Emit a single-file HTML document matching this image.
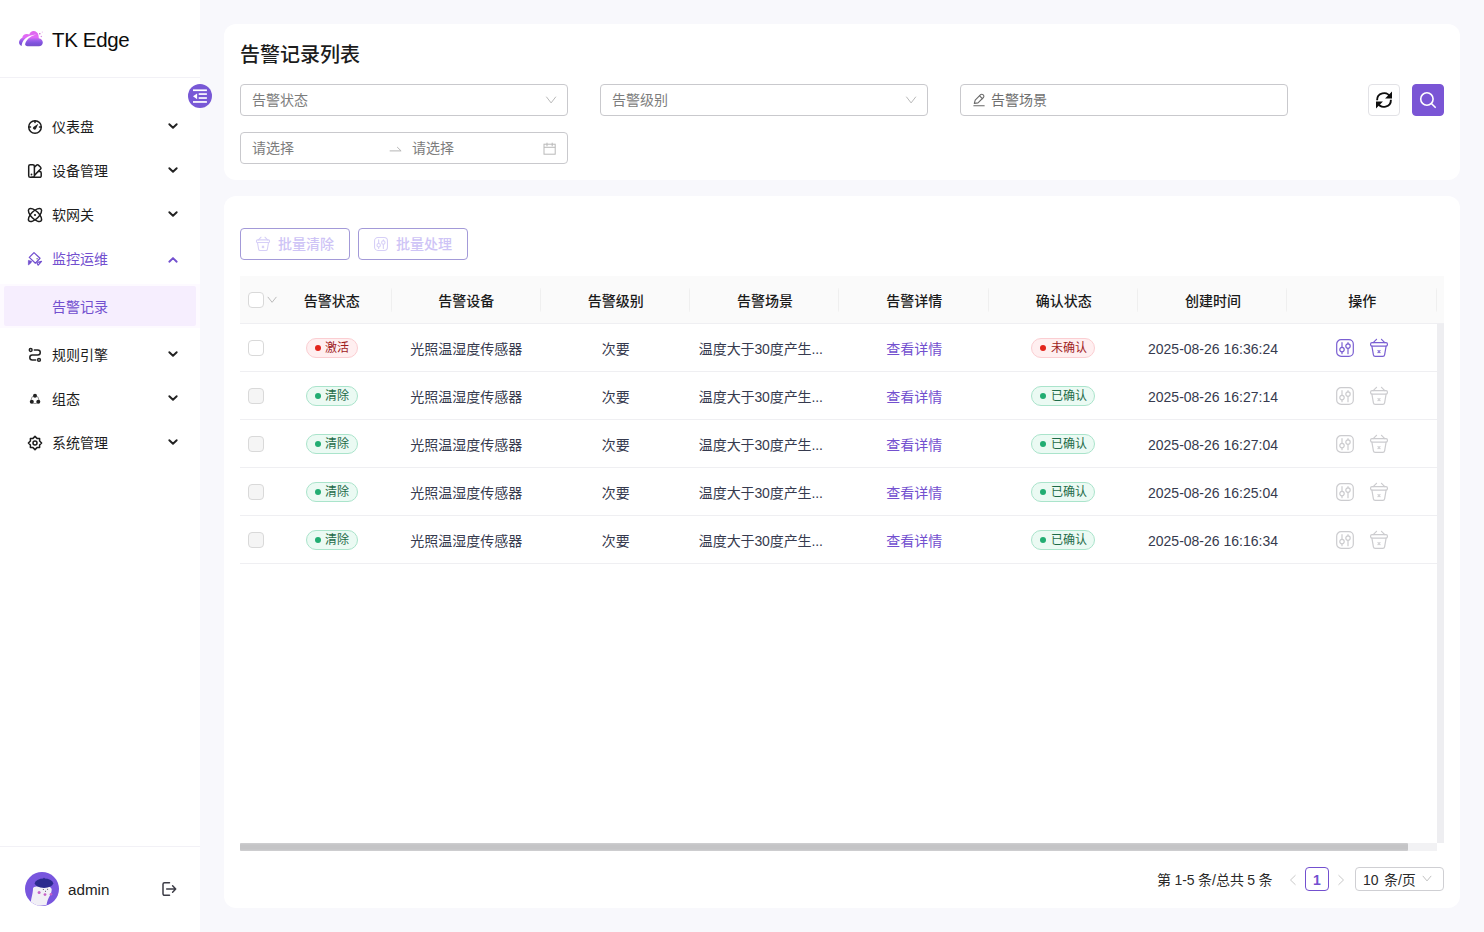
<!DOCTYPE html>
<html lang="zh-CN">
<head>
<meta charset="utf-8">
<title>TK Edge - 告警记录列表</title>
<style>
*{box-sizing:border-box;margin:0;padding:0}
html,body{width:1484px;height:932px;overflow:hidden}
body{font-family:"Liberation Sans","Noto Sans CJK SC",sans-serif;font-size:14px;color:#1f1f1f;background:#f8f8fc;position:relative}
svg{display:block;overflow:visible}
/* ---------- sidebar ---------- */
.side{position:absolute;left:0;top:0;width:200px;height:932px;background:#fff}
.logo{position:absolute;left:0;top:0;width:200px;height:78px;border-bottom:1px solid #f2f1f6}
.logo .lg{position:absolute;left:12px;top:24px}
.logo .t{position:absolute;left:52px;top:24px;font-size:20.5px;line-height:31px;color:#0c0c0c;white-space:nowrap;letter-spacing:-.35px}
.fold{position:absolute;left:188px;top:84px;width:24px;height:24px;border-radius:50%;background:#7858d6;z-index:5}
.fold svg{position:absolute;left:0;top:0}
.mi{position:absolute;left:0;width:200px;height:40px;line-height:40px;font-size:14px;color:#1d1d1d}
.mi .ic{position:absolute;left:27px;top:12px;width:16px;height:16px}
.mi .tx{position:absolute;left:52px;top:0;white-space:nowrap}
.mi .ar{position:absolute;left:167px;top:13px;width:12px;height:12px}
.mi.on{color:#7350cf}
.subwrap{position:absolute;left:0;top:284px;width:200px;height:44px;background:#fdfaff}
.sub{position:absolute;left:4px;top:286px;width:192px;height:40px;background:#f6eefe;border-radius:2px;color:#7350cf;line-height:43px}
.sub span{position:absolute;left:48px;top:0;white-space:nowrap}
.user{position:absolute;left:0;top:846px;width:200px;height:86px;border-top:1px solid #f2f1f6}
.user .av{position:absolute;left:25px;top:25px}
.user .nm{position:absolute;left:68px;top:32px;font-size:15.2px;line-height:22px;color:#222;white-space:nowrap}
.user .out{position:absolute;left:161px;top:34px}
/* ---------- main ---------- */
.card{position:absolute;left:224px;width:1236px;background:#fff;border-radius:12px}
.c1{top:24px;height:156px}
.c2{top:196px;height:712px}
h1{position:absolute;left:16px;top:17px;font-size:20px;line-height:28px;font-weight:500;color:#1c1c1c;white-space:nowrap}
.inp{position:absolute;height:32px;border:1px solid #c9c9cd;border-radius:4px;background:#fff;color:#7d7d7d;line-height:30px;font-size:14px;white-space:nowrap}
.inp .ph{position:absolute;left:11px;top:0}
.inp svg{position:absolute}
.btn{position:absolute;height:32px;border-radius:4px;line-height:30px;font-size:14px;white-space:nowrap}
.btn svg{position:absolute}
.ib{width:32px;border:1px solid #e2e2e6;background:#fff}
.ib.pri{background:#7a55d5;border-color:#7a55d5}
.gb{border:1px solid #a39ad8;color:#cec4f6;font-weight:500;background:#fff}
.gb span{position:absolute;top:0}
/* table */
.tb{position:absolute;left:16px;top:80px;width:1204px;height:575px}
.th{position:absolute;left:0;top:0;width:1204px;height:48px;background:#fafafa;border-bottom:1px solid #efeff2;font-weight:500;color:#1a1a1a}
.th .c{position:absolute;top:0;height:47px;line-height:50px;text-align:center;white-space:nowrap}
.th i{position:absolute;top:12px;width:1px;height:24px;background:linear-gradient(#f6f6f6,#efefef 10%,#efefef 90%,#f6f6f6)}
.tr{position:absolute;left:0;width:1197px;height:48px;border-bottom:1px solid #efeff2;color:#363a4e}
.tr .c{position:absolute;top:0;height:47px;line-height:50px;text-align:center;white-space:nowrap;overflow:hidden}
.cb{position:absolute;left:8px;top:16px;width:16px;height:16px;border:1px solid #d9d9d9;border-radius:4px;background:#fff}
.cb.dis{background:#f5f5f5}
.tag{position:absolute;top:14px;height:20px;border-radius:10px;border:1px solid;font-size:12px;line-height:18px;text-align:left;padding-left:18px}
.tag:before{content:"";position:absolute;left:8px;top:6px;width:6px;height:6px;border-radius:50%}
.tag.r{background:#ffeff0;border-color:#fbced2;color:#9e1c1e}
.tag.r:before{background:#e3241b}
.tag.g{background:#ebfaf3;border-color:#aae4cb;color:#1e6a48}
.tag.g:before{background:#22ad72}
.lk{color:#7350cf}
.vtrack{position:absolute;left:1197px;top:48px;width:7px;height:519px;background:#eeeef1}
.htrack{position:absolute;left:0;top:567px;width:1197px;height:8px;background:#f2f2f4}
.hthumb{position:absolute;left:0;top:0;width:1168px;height:8px;background:linear-gradient(#d0d0d2,#c4c4c6 25%,#c4c4c6 75%,#d0d0d2);border-radius:1px}
/* pagination */
.pg{position:absolute;font-size:14px;line-height:24px;color:#2a2a2a;white-space:nowrap}
</style>
</head>
<body>
<div class="side">
  <div class="logo">
    <svg class="lg" width="40" height="30" viewBox="12 24 40 30">
      <defs><linearGradient id="lg" gradientUnits="userSpaceOnUse" x1="0" y1="31" x2="0" y2="46.5"><stop offset="0" stop-color="#de66ec"/><stop offset="0.4" stop-color="#e36af7"/><stop offset="0.62" stop-color="#9a5eea"/><stop offset="0.78" stop-color="#7f53dd"/><stop offset="1" stop-color="#7650c8"/></linearGradient></defs>
      <path d="M21.4 46c-1.900-.900-2.800-2.900-2.200-4.700.600-1.700 2-3 3.100-3.500.200-2.300 2.200-4 4.700-3.900.900 0 1.700.200 2.300.500.600-2 2.300-3.300 4.200-3.300 2.400 0 4.400 1.700 4.900 3.900.300 1.300.400 2.500.400 3.300 2.300.300 4 2 4 4.200 0 2.200-1.700 3.800-3.800 3.800H27.600c-1.500 0-2.700-1.300-2.700-2.700z" fill="url(#lg)"/>
      <path d="M21.700 46.600C21.300 41 27 35 36.200 34.600 30.200 36 25.200 40 24.700 46.600z" fill="#fff"/>
      <circle cx="39.800" cy="33.800" r=".8" fill="#c860c8"/><circle cx="42.300" cy="32.100" r=".6" fill="#e9b5ee"/><circle cx="41.300" cy="36.500" r=".7" fill="#d88ae6"/>
    </svg>
    <div class="t">TK Edge</div>
  </div>
  <div class="mi" style="top:107px"><svg class="ic" viewBox="27 119 16 16"><g fill="none" stroke="#1c1c1c" stroke-width="1.500" stroke-linecap="round"><circle cx="35" cy="127" r="6.300"/><path d="M35 121.300v1.200M29.300 127h1.200M39.500 127h1.200"/></g><path d="M38.300 123.700l-2.300 5a1.600 1.600 0 1 1-2.600-1.800z" fill="#222"/></svg><span class="tx">仪表盘</span><svg class="ar" viewBox="167 120 12 12"><path d="M169.300 124.200l3.700 3.600 3.700-3.600" fill="none" stroke="#222" stroke-width="1.900" stroke-linecap="round" stroke-linejoin="round"/></svg></div>
  <div class="mi" style="top:151px"><svg class="ic" viewBox="27 163 16 16"><g fill="none" stroke="#1c1c1c" stroke-width="1.500" stroke-linecap="round" stroke-linejoin="round"><rect x="28.700" y="164.700" width="5.700" height="12.600" rx="1.600"/><path d="M34.600 167l2-1.900a1.300 1.300 0 0 1 1.800 0l2.200 2.200a1.300 1.300 0 0 1 0 1.800l-6 6"/><path d="M38.500 171.600h1.300a1.400 1.400 0 0 1 1.400 1.400v2.900a1.400 1.400 0 0 1-1.400 1.400h-8"/></g><circle cx="31.500" cy="174.500" r=".9" fill="#222"/></svg><span class="tx">设备管理</span><svg class="ar" viewBox="167 120 12 12"><path d="M169.300 124.200l3.700 3.600 3.700-3.600" fill="none" stroke="#222" stroke-width="1.900" stroke-linecap="round" stroke-linejoin="round"/></svg></div>
  <div class="mi" style="top:195px"><svg class="ic" viewBox="27 207 16 16"><g fill="none" stroke="#1c1c1c" stroke-width="1.500"><ellipse cx="35" cy="215" rx="8.500" ry="3.800" transform="rotate(45 35 215)"/><ellipse cx="35" cy="215" rx="8.500" ry="3.800" transform="rotate(-45 35 215)"/></g><circle cx="35" cy="215" r="1.100" fill="#222"/></svg><span class="tx">软网关</span><svg class="ar" viewBox="167 120 12 12"><path d="M169.300 124.200l3.700 3.600 3.700-3.600" fill="none" stroke="#222" stroke-width="1.900" stroke-linecap="round" stroke-linejoin="round"/></svg></div>
  <div class="mi on" style="top:239px"><svg class="ic" viewBox="27 251 16 16"><g fill="none" stroke="#7350cf" stroke-width="1.250" stroke-linecap="round" stroke-linejoin="round"><path d="M34 252.600l6 5.700-4.600 4.900-6.100-5.800z"/><path d="M37.800 262.300l3.700-.9-3.300 3.800-1-1.800"/></g><path d="M28.400 260.400l3.300.9-.9 1.700-2.400 1.900z" fill="#7350cf" stroke="#7350cf" stroke-width=".7" stroke-linejoin="round"/><circle cx="37.100" cy="258.800" r=".75" fill="#6d6d80"/></svg><span class="tx">监控运维</span><svg class="ar" viewBox="167 252 12 12"><path d="M169.300 261.700l3.700-3.600 3.700 3.600" fill="none" stroke="#7350cf" stroke-width="1.900" stroke-linecap="round" stroke-linejoin="round"/></svg></div>
  <div class="subwrap"></div>
  <div class="sub"><span>告警记录</span></div>
  <div class="mi" style="top:335px"><svg class="ic" viewBox="27 347 16 16"><g fill="none" stroke="#222" stroke-width="1.500" stroke-linecap="round"><circle cx="30.700" cy="350" r="1.400"/><circle cx="39" cy="359.900" r="1.400"/><path d="M34.300 349.900h3.400a2.550 2.550 0 0 1 0 5.100h-5.400a2.500 2.500 0 0 0 0 5h3.400"/></g></svg><span class="tx">规则引擎</span><svg class="ar" viewBox="167 120 12 12"><path d="M169.300 124.200l3.700 3.600 3.700-3.600" fill="none" stroke="#222" stroke-width="1.900" stroke-linecap="round" stroke-linejoin="round"/></svg></div>
  <div class="mi" style="top:379px"><svg class="ic" viewBox="27 391 16 16"><circle cx="35" cy="399.800" r="3.900" fill="none" stroke="#555" stroke-width=".6"/><g fill="#222"><circle cx="35" cy="395.700" r="2"/><circle cx="31.800" cy="401.800" r="2"/><circle cx="38.300" cy="401.800" r="2"/></g></svg><span class="tx">组态</span><svg class="ar" viewBox="167 120 12 12"><path d="M169.300 124.200l3.700 3.600 3.700-3.600" fill="none" stroke="#222" stroke-width="1.900" stroke-linecap="round" stroke-linejoin="round"/></svg></div>
  <div class="mi" style="top:423px"><svg class="ic" viewBox="27 435 16 16"><g fill="none" stroke="#1c1c1c" stroke-width="1.500" stroke-linejoin="round"><path d="M35 436.400l2 2h2.600v2.600l2 2-2 2v2.600H37l-2 2-2-2h-2.600V445l-2-2 2-2v-2.600H33z"/><circle cx="35" cy="443" r="2"/></g></svg><span class="tx">系统管理</span><svg class="ar" viewBox="167 120 12 12"><path d="M169.300 124.200l3.700 3.600 3.700-3.600" fill="none" stroke="#222" stroke-width="1.900" stroke-linecap="round" stroke-linejoin="round"/></svg></div>
  <div class="user">
    <svg class="av" width="34" height="34" viewBox="25 872 34 34"><defs><clipPath id="avc"><circle cx="42" cy="889" r="17"/></clipPath></defs><g clip-path="url(#avc)"><rect x="25" y="872" width="34" height="34" fill="#7856de"/><path d="M33 888.500c0-1.500 3-2.500 9-2.500s9.700 1 9.700 3.500c0 5-4 8-5.200 15.500l-16 2c0-8 2.500-13 2.500-18.500z" fill="#f1eff6"/><ellipse cx="44" cy="883.300" rx="9.200" ry="4.700" fill="#2b2a8e"/><rect x="43.300" y="877.700" width="1.400" height="1.600" rx=".6" fill="#2b2a8e"/><circle cx="39.100" cy="892.600" r="1.500" fill="#c662c8"/><circle cx="45" cy="894.600" r="1.400" fill="#c662c8"/><circle cx="51" cy="894.300" r="1.300" fill="#c662c8"/><circle cx="43.300" cy="889.400" r=".5" fill="#334"/><circle cx="47.600" cy="889.200" r=".5" fill="#334"/><path d="M45.600 890.200l-.5 1.800h.9z" fill="#334"/></g></svg>
    <div class="nm">admin</div>
    <svg class="out" width="16" height="16" viewBox="161 881 16 16"><g fill="none" stroke="#3c3c46" stroke-width="1.500" stroke-linecap="round" stroke-linejoin="round"><path d="M169.500 882.700h-5a1.500 1.500 0 0 0-1.500 1.500v9.600a1.500 1.500 0 0 0 1.500 1.500h5"/><path d="M166.700 889h8.800M172.600 885.800l3.100 3.200-3.100 3.200"/></g></svg>
  </div>
</div>
<div class="fold"><svg width="24" height="24" viewBox="188 84 24 24" fill="#fff"><rect x="193" y="89.400" width="13.900" height="1.700"/><rect x="198.700" y="93.250" width="8.200" height="1.650"/><rect x="198.700" y="97.200" width="8.200" height="1.650"/><rect x="193" y="101.100" width="13.900" height="1.700"/><path d="M193 96.350l4.100-2.900v5.800z"/></svg></div>
<div class="card c1">
  <h1>告警记录列表</h1>
  <div class="inp" style="left:16px;top:60px;width:328px"><span class="ph">告警状态</span><svg width="12" height="8" viewBox="545 96 12 8" style="left:304px;top:11px"><path d="M546.300 96.700l4.800 6.200 4.800-6.200" fill="none" stroke="#b9b9b9" stroke-width="1"/></svg></div>
  <div class="inp" style="left:376px;top:60px;width:328px"><span class="ph">告警级别</span><svg width="12" height="8" viewBox="545 96 12 8" style="left:304px;top:11px"><path d="M546.300 96.700l4.800 6.200 4.800-6.200" fill="none" stroke="#b9b9b9" stroke-width="1"/></svg></div>
  <div class="inp" style="left:736px;top:60px;width:328px"><svg width="14" height="16" viewBox="972 92 14 16" style="left:11px;top:7px"><g fill="none" stroke="#6a6a6a" stroke-width="1.100" stroke-linejoin="round" stroke-linecap="round"><path d="M974.300 103.400l.9-3.300 5.400-5.400a1.600 1.600 0 0 1 2.300 0l.5.500a1.600 1.600 0 0 1 0 2.300l-5.400 5.400z"/><path d="M979.600 95.800l2.800 2.800"/><path d="M973.800 105.800h10.400"/></g></svg><span class="ph" style="left:30px;color:#6f6f6f">告警场景</span></div>
  <div class="btn ib" style="left:1144px;top:60px"><svg width="16" height="16" viewBox="0 0 16 16" style="left:7px;top:7px"><g fill="none" stroke="#0e0e0e" stroke-width="1.900"><path d="M1.100 8.300A6.900 6.900 0 0 1 14.200 5.100"/><path d="M14.900 7.700A6.900 6.900 0 0 1 1.800 10.900"/><path d="M15.200 1.400v4.200h-4.200z" stroke-width="1.600" fill="#0e0e0e" stroke-linejoin="miter"/><path d="M.8 14.600v-4.200h4.200z" stroke-width="1.600" fill="#0e0e0e"/></g></svg></div>
  <div class="btn ib pri" style="left:1188px;top:60px"><svg width="16" height="16" viewBox="0 0 16 16" style="left:7px;top:7px"><g fill="none" stroke="#fff" stroke-width="1.600" stroke-linecap="round"><circle cx="6.900" cy="7" r="6.200"/><path d="M11.400 11.500l3.800 3.800"/></g></svg></div>
  <div class="inp" style="left:16px;top:108px;width:328px"><span class="ph">请选择</span><svg width="13" height="6" viewBox="388.500 146.500 13 6" style="left:147.500px;top:13.500px"><path d="M389.200 150.400h11.400l-3.900-3.800" fill="none" stroke="#b5b5b5" stroke-width="1"/></svg><span class="ph" style="left:171px">请选择</span><svg width="13" height="13" viewBox="542.500 141.500 13 13" style="left:301.500px;top:8.500px"><g fill="none" stroke="#b9b9b9" stroke-width="1"><rect x="543.500" y="143.700" width="11.200" height="10"/><path d="M543.500 146.800h11.200M546.500 142.200v3.600M551.700 142.200v3.600"/></g></svg></div>
</div>
<div class="card c2">
  <div class="btn gb" style="left:16px;top:32px;width:110px"><svg width="14" height="14" viewBox="0 0 18 18" style="left:14.500px;top:8px"><g fill="none" stroke="#d6cff7" stroke-width="1.400" stroke-linecap="round" stroke-linejoin="round"><rect x=".6" y="3.700" width="16.800" height="3.400" rx="1.400"/><path d="M6.500.3L3.200 3.700M11.500.3l3.300 3.400"/><path d="M1.900 7.100l1.500 8.800a1.800 1.800 0 0 0 1.800 1.500h7.600a1.800 1.800 0 0 0 1.800-1.500l1.500-8.800"/><path d="M8 11.700l2 2M10 11.700l-2 2"/></g></svg><span style="left:37px">批量清除</span></div>
  <div class="btn gb" style="left:134px;top:32px;width:110px"><svg width="14" height="14" viewBox="0 0 18 18" style="left:15px;top:7.500px"><g fill="none" stroke="#d6cff7" stroke-width="1.400" stroke-linecap="round"><rect x=".7" y=".7" width="16.600" height="16.600" rx="4.400"/><path d="M6 3.700v4.200M6 13.200v1.500M12 3.700v1M12 9.700v5"/><circle cx="6" cy="10.600" r="2.200"/><circle cx="12" cy="7.100" r="2.200"/></g></svg><span style="left:37px">批量处理</span></div>
  <div class="tb">
    <div class="th">
      <div class="cb"></div><svg width="10" height="7" viewBox="267 296 10 7" style="position:absolute;left:27px;top:20px"><path d="M267.800 296.900l4.300 5.400 4.300-5.400" fill="none" stroke="#bcbcbc" stroke-width="1"/></svg>
      <i style="left:151px"></i><i style="left:300px"></i><i style="left:449px"></i><i style="left:598px"></i><i style="left:748px"></i><i style="left:897px"></i><i style="left:1046px"></i><i style="left:1196px"></i>
      <div class="c" style="left:32px;width:119.67px">告警状态</div>
      <div class="c" style="left:151.67px;width:149.33px">告警设备</div>
      <div class="c" style="left:301px;width:149.33px">告警级别</div>
      <div class="c" style="left:450.33px;width:149.34px">告警场景</div>
      <div class="c" style="left:599.67px;width:149.33px">告警详情</div>
      <div class="c" style="left:749px;width:149.33px">确认状态</div>
      <div class="c" style="left:898.33px;width:149.34px">创建时间</div>
      <div class="c" style="left:1047.67px;width:149.33px">操作</div>
    </div>
    <div class="tr" style="top:48px">
      <div class="cb"></div>
      <div class="c" style="left:32px;width:119.67px"><span class="tag r" style="left:34px;width:52px">激活</span></div>
      <div class="c" style="left:151.67px;width:149.33px">光照温湿度传感器</div>
      <div class="c" style="left:301px;width:149.33px">次要</div>
      <div class="c" style="left:450.33px;width:149.34px;text-align:left;padding-left:8.500px;letter-spacing:-.1px">温度大于30度产生...</div>
      <div class="c lk" style="left:599.67px;width:149.33px">查看详情</div>
      <div class="c" style="left:749px;width:149.33px"><span class="tag r" style="left:42px;width:64px;padding-left:19px">未确认</span></div>
      <div class="c" style="left:898.33px;width:149.34px">2025-08-26 16:36:24</div>
      <div class="c" style="left:1047.67px;width:149.33px"><svg width="18" height="18" viewBox="0 0 18 18" style="position:absolute;left:48.400px;top:15px"><g fill="none" stroke="#7a5fd2" stroke-width="1.200" stroke-linecap="round"><rect x=".7" y=".7" width="16.600" height="16.600" rx="4.400"/><path d="M6 3.700v4.200M6 13.200v1.500M12 3.700v1M12 9.700v5"/><circle cx="6" cy="10.600" r="2.200"/><circle cx="12" cy="7.100" r="2.200"/></g></svg><svg width="18" height="18" viewBox="0 0 18 18" style="position:absolute;left:82.300px;top:15px"><g fill="none" stroke="#7a5fd2" stroke-width="1.200" stroke-linecap="round" stroke-linejoin="round"><rect x=".6" y="3.700" width="16.800" height="3.400" rx="1.400"/><path d="M6.500.3L3.200 3.700M11.500.3l3.300 3.400"/><path d="M1.900 7.100l1.500 8.800a1.800 1.800 0 0 0 1.800 1.500h7.600a1.800 1.800 0 0 0 1.800-1.500l1.500-8.800"/><path d="M8 11.700l2 2M10 11.700l-2 2"/></g></svg></div>
    </div>
    <div class="tr" style="top:96px">
      <div class="cb dis"></div>
      <div class="c" style="left:32px;width:119.67px"><span class="tag g" style="left:34px;width:52px">清除</span></div>
      <div class="c" style="left:151.67px;width:149.33px">光照温湿度传感器</div>
      <div class="c" style="left:301px;width:149.33px">次要</div>
      <div class="c" style="left:450.33px;width:149.34px;text-align:left;padding-left:8.500px;letter-spacing:-.1px">温度大于30度产生...</div>
      <div class="c lk" style="left:599.67px;width:149.33px">查看详情</div>
      <div class="c" style="left:749px;width:149.33px"><span class="tag g" style="left:42px;width:64px;padding-left:19px">已确认</span></div>
      <div class="c" style="left:898.33px;width:149.34px">2025-08-26 16:27:14</div>
      <div class="c" style="left:1047.67px;width:149.33px"><svg width="18" height="18" viewBox="0 0 18 18" style="position:absolute;left:48.400px;top:15px"><g fill="none" stroke="#cccccf" stroke-width="1.200" stroke-linecap="round"><rect x=".7" y=".7" width="16.600" height="16.600" rx="4.400"/><path d="M6 3.700v4.200M6 13.200v1.500M12 3.700v1M12 9.700v5"/><circle cx="6" cy="10.600" r="2.200"/><circle cx="12" cy="7.100" r="2.200"/></g></svg><svg width="18" height="18" viewBox="0 0 18 18" style="position:absolute;left:82.300px;top:15px"><g fill="none" stroke="#cccccf" stroke-width="1.200" stroke-linecap="round" stroke-linejoin="round"><rect x=".6" y="3.700" width="16.800" height="3.400" rx="1.400"/><path d="M6.500.3L3.200 3.700M11.500.3l3.300 3.400"/><path d="M1.900 7.100l1.500 8.800a1.800 1.800 0 0 0 1.800 1.500h7.600a1.800 1.800 0 0 0 1.800-1.500l1.500-8.800"/><path d="M8 11.700l2 2M10 11.700l-2 2"/></g></svg></div>
    </div>
    <div class="tr" style="top:144px">
      <div class="cb dis"></div>
      <div class="c" style="left:32px;width:119.67px"><span class="tag g" style="left:34px;width:52px">清除</span></div>
      <div class="c" style="left:151.67px;width:149.33px">光照温湿度传感器</div>
      <div class="c" style="left:301px;width:149.33px">次要</div>
      <div class="c" style="left:450.33px;width:149.34px;text-align:left;padding-left:8.500px;letter-spacing:-.1px">温度大于30度产生...</div>
      <div class="c lk" style="left:599.67px;width:149.33px">查看详情</div>
      <div class="c" style="left:749px;width:149.33px"><span class="tag g" style="left:42px;width:64px;padding-left:19px">已确认</span></div>
      <div class="c" style="left:898.33px;width:149.34px">2025-08-26 16:27:04</div>
      <div class="c" style="left:1047.67px;width:149.33px"><svg width="18" height="18" viewBox="0 0 18 18" style="position:absolute;left:48.400px;top:15px"><g fill="none" stroke="#cccccf" stroke-width="1.200" stroke-linecap="round"><rect x=".7" y=".7" width="16.600" height="16.600" rx="4.400"/><path d="M6 3.700v4.200M6 13.200v1.500M12 3.700v1M12 9.700v5"/><circle cx="6" cy="10.600" r="2.200"/><circle cx="12" cy="7.100" r="2.200"/></g></svg><svg width="18" height="18" viewBox="0 0 18 18" style="position:absolute;left:82.300px;top:15px"><g fill="none" stroke="#cccccf" stroke-width="1.200" stroke-linecap="round" stroke-linejoin="round"><rect x=".6" y="3.700" width="16.800" height="3.400" rx="1.400"/><path d="M6.500.3L3.200 3.700M11.500.3l3.300 3.400"/><path d="M1.900 7.100l1.500 8.800a1.800 1.800 0 0 0 1.800 1.500h7.600a1.800 1.800 0 0 0 1.800-1.500l1.500-8.800"/><path d="M8 11.700l2 2M10 11.700l-2 2"/></g></svg></div>
    </div>
    <div class="tr" style="top:192px">
      <div class="cb dis"></div>
      <div class="c" style="left:32px;width:119.67px"><span class="tag g" style="left:34px;width:52px">清除</span></div>
      <div class="c" style="left:151.67px;width:149.33px">光照温湿度传感器</div>
      <div class="c" style="left:301px;width:149.33px">次要</div>
      <div class="c" style="left:450.33px;width:149.34px;text-align:left;padding-left:8.500px;letter-spacing:-.1px">温度大于30度产生...</div>
      <div class="c lk" style="left:599.67px;width:149.33px">查看详情</div>
      <div class="c" style="left:749px;width:149.33px"><span class="tag g" style="left:42px;width:64px;padding-left:19px">已确认</span></div>
      <div class="c" style="left:898.33px;width:149.34px">2025-08-26 16:25:04</div>
      <div class="c" style="left:1047.67px;width:149.33px"><svg width="18" height="18" viewBox="0 0 18 18" style="position:absolute;left:48.400px;top:15px"><g fill="none" stroke="#cccccf" stroke-width="1.200" stroke-linecap="round"><rect x=".7" y=".7" width="16.600" height="16.600" rx="4.400"/><path d="M6 3.700v4.200M6 13.200v1.500M12 3.700v1M12 9.700v5"/><circle cx="6" cy="10.600" r="2.200"/><circle cx="12" cy="7.100" r="2.200"/></g></svg><svg width="18" height="18" viewBox="0 0 18 18" style="position:absolute;left:82.300px;top:15px"><g fill="none" stroke="#cccccf" stroke-width="1.200" stroke-linecap="round" stroke-linejoin="round"><rect x=".6" y="3.700" width="16.800" height="3.400" rx="1.400"/><path d="M6.500.3L3.200 3.700M11.500.3l3.300 3.400"/><path d="M1.900 7.100l1.500 8.800a1.800 1.800 0 0 0 1.800 1.500h7.600a1.800 1.800 0 0 0 1.800-1.500l1.500-8.800"/><path d="M8 11.700l2 2M10 11.700l-2 2"/></g></svg></div>
    </div>
    <div class="tr" style="top:240px">
      <div class="cb dis"></div>
      <div class="c" style="left:32px;width:119.67px"><span class="tag g" style="left:34px;width:52px">清除</span></div>
      <div class="c" style="left:151.67px;width:149.33px">光照温湿度传感器</div>
      <div class="c" style="left:301px;width:149.33px">次要</div>
      <div class="c" style="left:450.33px;width:149.34px;text-align:left;padding-left:8.500px;letter-spacing:-.1px">温度大于30度产生...</div>
      <div class="c lk" style="left:599.67px;width:149.33px">查看详情</div>
      <div class="c" style="left:749px;width:149.33px"><span class="tag g" style="left:42px;width:64px;padding-left:19px">已确认</span></div>
      <div class="c" style="left:898.33px;width:149.34px">2025-08-26 16:16:34</div>
      <div class="c" style="left:1047.67px;width:149.33px"><svg width="18" height="18" viewBox="0 0 18 18" style="position:absolute;left:48.400px;top:15px"><g fill="none" stroke="#cccccf" stroke-width="1.200" stroke-linecap="round"><rect x=".7" y=".7" width="16.600" height="16.600" rx="4.400"/><path d="M6 3.700v4.200M6 13.200v1.500M12 3.700v1M12 9.700v5"/><circle cx="6" cy="10.600" r="2.200"/><circle cx="12" cy="7.100" r="2.200"/></g></svg><svg width="18" height="18" viewBox="0 0 18 18" style="position:absolute;left:82.300px;top:15px"><g fill="none" stroke="#cccccf" stroke-width="1.200" stroke-linecap="round" stroke-linejoin="round"><rect x=".6" y="3.700" width="16.800" height="3.400" rx="1.400"/><path d="M6.500.3L3.200 3.700M11.500.3l3.300 3.400"/><path d="M1.900 7.100l1.500 8.800a1.800 1.800 0 0 0 1.800 1.500h7.600a1.800 1.800 0 0 0 1.800-1.500l1.500-8.800"/><path d="M8 11.700l2 2M10 11.700l-2 2"/></g></svg></div>
    </div>
    <div class="vtrack"></div>
    <div class="htrack"><div class="hthumb"></div></div>
  </div>
  <div class="pg" style="left:933px;top:672px;word-spacing:-.5px">第 1-5 条/总共 5 条</div>
  <svg width="8" height="12" viewBox="0 0 8 12" style="position:absolute;left:1065px;top:678px"><path d="M6.500 1.200L1.500 6l5 4.800" fill="none" stroke="#c8c8c8" stroke-width="1"/></svg>
  <div class="pg" style="left:1081px;top:671px;width:24px;height:24px;border:1px solid #7350cf;border-radius:4px;text-align:center;line-height:24px;color:#7350cf;font-weight:700">1</div>
  <svg width="8" height="12" viewBox="0 0 8 12" style="position:absolute;left:1113px;top:678px"><path d="M1.500 1.200L6.500 6l-5 4.800" fill="none" stroke="#c8c8c8" stroke-width="1"/></svg>
  <div class="pg" style="left:1131px;top:671px;width:89px;height:24px;border:1px solid #cfcfd3;border-radius:4px;line-height:22px"><span style="position:absolute;left:7px;top:1px;word-spacing:1.500px">10 条/页</span><svg width="10" height="7" viewBox="0 0 10 7" style="position:absolute;left:66px;top:7px"><path d="M.8.900l4.200 5 4.200-5" fill="none" stroke="#c2c2c2" stroke-width="1"/></svg></div>
</div>
</body>
</html>
